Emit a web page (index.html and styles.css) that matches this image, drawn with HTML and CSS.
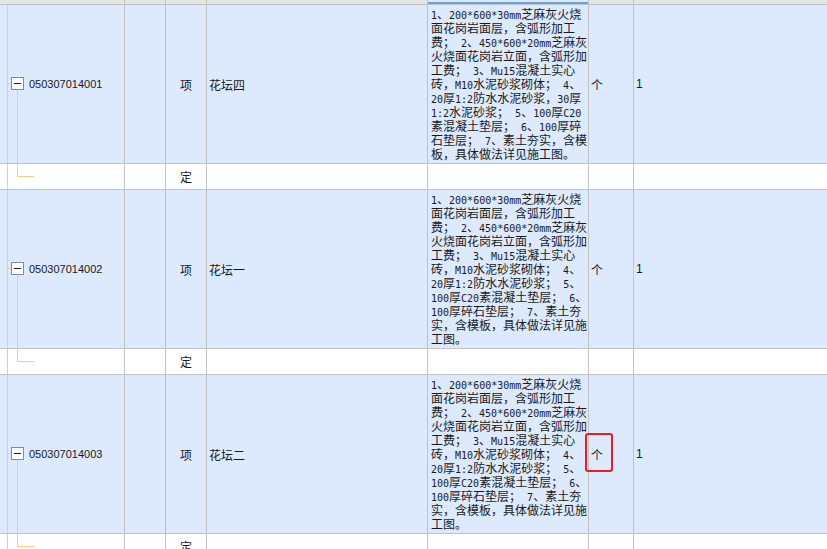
FILE: index.html
```html
<!DOCTYPE html>
<html lang="zh-CN">
<head>
<meta charset="utf-8">
<title>清单</title>
<link rel="stylesheet" href="styles.css">
</head>
<body>
<div class="sheet">
  <div class="row hdr">
    <div class="cell"></div><div class="cell"></div><div class="cell"></div><div class="cell"></div><div class="cell sel"></div><div class="cell"></div><div class="cell"></div>
  </div>

  <div class="row item">
    <div class="cell code"><span class="tog"></span>050307014001</div>
    <div class="cell"></div>
    <div class="cell type">项</div>
    <div class="cell name">花坛四</div>
    <div class="cell desc"><p class="txt"><span class="l">1</span>、<span class="l">200*600*30mm</span>芝麻灰火烧<br>面花岗岩面层，含弧形加工<br>费；<span class="l"> 2</span>、<span class="l">450*600*20mm</span>芝麻灰<br>火烧面花岗岩立面，含弧形加<br>工费；<span class="l"> 3</span>、<span class="l">Mu15</span>混凝土实心<br>砖，<span class="l">M10</span>水泥砂浆砌体；<span class="l"> 4</span>、<br><span class="l">20</span>厚<span class="l">1:2</span>防水水泥砂浆，<span class="l">30</span>厚<br><span class="l">1:2</span>水泥砂浆；<span class="l"> 5</span>、<span class="l">100</span>厚<span class="l">C20</span><br>素混凝土垫层；<span class="l"> 6</span>、<span class="l">100</span>厚碎<br>石垫层；<span class="l"> 7</span>、素土夯实，含模<br>板，具体做法详见施工图。</p></div>
    <div class="cell unit">个</div>
    <div class="cell qty">1</div>
  </div>
  <div class="row quota">
    <div class="cell code"></div>
    <div class="cell"></div>
    <div class="cell type">定</div>
    <div class="cell"></div><div class="cell"></div><div class="cell"></div><div class="cell"></div>
  </div>

  <div class="row item">
    <div class="cell code"><span class="tog"></span>050307014002</div>
    <div class="cell"></div>
    <div class="cell type">项</div>
    <div class="cell name">花坛一</div>
    <div class="cell desc"><p class="txt"><span class="l">1</span>、<span class="l">200*600*30mm</span>芝麻灰火烧<br>面花岗岩面层，含弧形加工<br>费；<span class="l"> 2</span>、<span class="l">450*600*20mm</span>芝麻灰<br>火烧面花岗岩立面，含弧形加<br>工费；<span class="l"> 3</span>、<span class="l">Mu15</span>混凝土实心<br>砖，<span class="l">M10</span>水泥砂浆砌体；<span class="l"> 4</span>、<br><span class="l">20</span>厚<span class="l">1:2</span>防水水泥砂浆；<span class="l"> 5</span>、<br><span class="l">100</span>厚<span class="l">C20</span>素混凝土垫层；<span class="l"> 6</span>、<br><span class="l">100</span>厚碎石垫层；<span class="l"> 7</span>、素土夯<br>实，含模板，具体做法详见施<br>工图。</p></div>
    <div class="cell unit">个</div>
    <div class="cell qty">1</div>
  </div>
  <div class="row quota">
    <div class="cell code"></div>
    <div class="cell"></div>
    <div class="cell type">定</div>
    <div class="cell"></div><div class="cell"></div><div class="cell"></div><div class="cell"></div>
  </div>

  <div class="row item">
    <div class="cell code"><span class="tog"></span>050307014003</div>
    <div class="cell"></div>
    <div class="cell type">项</div>
    <div class="cell name">花坛二</div>
    <div class="cell desc"><p class="txt"><span class="l">1</span>、<span class="l">200*600*30mm</span>芝麻灰火烧<br>面花岗岩面层，含弧形加工<br>费；<span class="l"> 2</span>、<span class="l">450*600*20mm</span>芝麻灰<br>火烧面花岗岩立面，含弧形加<br>工费；<span class="l"> 3</span>、<span class="l">Mu15</span>混凝土实心<br>砖，<span class="l">M10</span>水泥砂浆砌体；<span class="l"> 4</span>、<br><span class="l">20</span>厚<span class="l">1:2</span>防水水泥砂浆；<span class="l"> 5</span>、<br><span class="l">100</span>厚<span class="l">C20</span>素混凝土垫层；<span class="l"> 6</span>、<br><span class="l">100</span>厚碎石垫层；<span class="l"> 7</span>、素土夯<br>实，含模板，具体做法详见施<br>工图。</p></div>
    <div class="cell unit marked">个</div>
    <div class="cell qty">1</div>
  </div>
  <div class="row quota">
    <div class="cell code"></div>
    <div class="cell"></div>
    <div class="cell type">定</div>
    <div class="cell"></div><div class="cell"></div><div class="cell"></div><div class="cell"></div>
  </div>
</div>
</body>
</html>
```
FILE: styles.css
```css
html, body {
  margin: 0;
  padding: 0;
  background: #ffffff;
  overflow: hidden;
}

.sheet {
  width: 827px;
  overflow: hidden;
  font-family: "Noto Sans CJK SC", sans-serif;
  font-size: 12px;
  color: #1a1a1a;
}

.row {
  display: grid;
  grid-template-columns: 125px 41px 41px 221px 161px 45px 1fr;
  box-sizing: border-box;
  border-bottom: 1px solid #c2c2c2;
}

.cell {
  box-sizing: border-box;
  border-right: 1px solid #c2c2c2;
  display: flex;
  align-items: center;
  position: relative;
  white-space: nowrap;
  overflow: hidden;
}

.cell:last-child {
  border-right: none;
}

.hdr {
  height: 5px;
  background: #e6e6e6;
}

.hdr .sel {
  box-shadow: inset 0 -2px 0 #5ea6f2;
}

.item {
  height: 159px;
  background: #dde9fd;
}

.quota {
  height: 26px;
  background: #ffffff;
}

.code {
  padding-left: 29px;
  font-family: "Liberation Sans", "Noto Sans CJK SC", sans-serif;
  font-size: 11px;
}

/* tree guide lines */
.code::before {
  content: "";
  position: absolute;
  left: 7px;
  top: 0;
  bottom: 0;
  width: 1px;
  background: #fdcb83;
}

.item .code::after {
  content: "";
  position: absolute;
  left: 17px;
  top: calc(50% + 6px);
  bottom: 0;
  width: 1px;
  background: #fdcb83;
}

.quota .code::after {
  content: "";
  position: absolute;
  left: 17px;
  top: 0;
  width: 16px;
  height: 12px;
  border-left: 1px solid #fdcb83;
  border-bottom: 1px solid #fdcb83;
}

.tog {
  position: absolute;
  left: 11px;
  top: calc(50% - 7px);
  width: 13px;
  height: 13px;
  box-sizing: border-box;
  border: 1px solid #8a8a8a;
  background: #ffffff;
  z-index: 1;
}

.tog::before {
  content: "";
  position: absolute;
  left: 2px;
  right: 2px;
  top: 5px;
  height: 1px;
  background: #1e1e1e;
}

.tog::after {
  content: "";
  position: absolute;
  left: -5px;
  top: 5px;
  width: 4px;
  height: 1px;
  background: #fdcb83;
}

.type {
  justify-content: center;
}

.name {
  padding-left: 2px;
}

.desc {
  padding-left: 3px;
}

.txt {
  margin: 0;
  line-height: 14px;
}

.l {
  font-family: "DejaVu Sans Mono", "Liberation Mono", monospace;
  font-size: 10px;
  line-height: 8px;
  white-space: pre;
}

.unit {
  padding-left: 2px;
  overflow: visible;
}

.qty {
  padding-left: 2px;
  font-family: "Liberation Sans", sans-serif;
}

.marked::after {
  content: "";
  position: absolute;
  left: -4px;
  top: 58px;
  width: 28px;
  height: 39px;
  box-sizing: border-box;
  border: 2px solid #ee1c1c;
  border-radius: 3px;
  z-index: 2;
}
```
